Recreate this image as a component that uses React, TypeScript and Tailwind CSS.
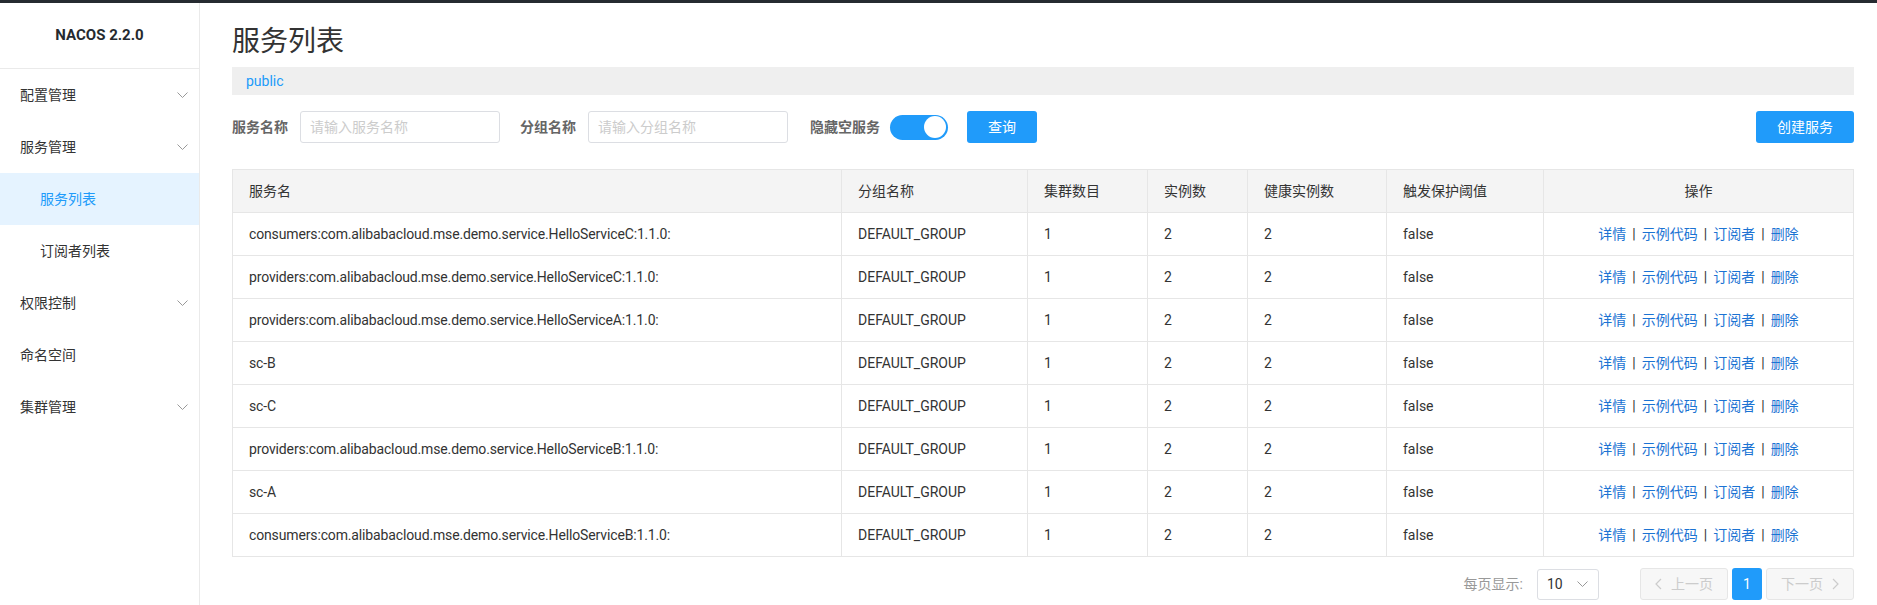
import React from "react"

const font = { fontFamily: "Roboto, 'Noto Sans CJK SC', sans-serif" }

const rows = [
  "consumers:com.alibabacloud.mse.demo.service.HelloServiceC:1.1.0:",
  "providers:com.alibabacloud.mse.demo.service.HelloServiceC:1.1.0:",
  "providers:com.alibabacloud.mse.demo.service.HelloServiceA:1.1.0:",
  "sc-B",
  "sc-C",
  "providers:com.alibabacloud.mse.demo.service.HelloServiceB:1.1.0:",
  "sc-A",
  "consumers:com.alibabacloud.mse.demo.service.HelloServiceB:1.1.0:",
]

const cols = [
  { title: "服务名", w: "w-[609px]" },
  { title: "分组名称", w: "w-[186px]" },
  { title: "集群数目", w: "w-[120px]" },
  { title: "实例数", w: "w-[100px]" },
  { title: "健康实例数", w: "w-[139px]" },
  { title: "触发保护阈值", w: "w-[157px]" },
]

function Chevron({ className = "" }: { className?: string }) {
  return (
    <svg width="11" height="6" viewBox="0 0 11 6" className={className}>
      <polyline points="0.5,0.5 5.5,5.5 10.5,0.5" fill="none" stroke="#999" strokeWidth="1" />
    </svg>
  )
}

const menu = [
  { label: "配置管理", arrow: true },
  { label: "服务管理", arrow: true },
  { label: "服务列表", sub: true, active: true },
  { label: "订阅者列表", sub: true },
  { label: "权限控制", arrow: true },
  { label: "命名空间" },
  { label: "集群管理", arrow: true },
]

export default function App() {
  return (
    <div className="w-[1877px] h-[605px] bg-white text-[#333] overflow-hidden flex flex-col" style={font}>
      <div className="h-[3px] bg-[#262b31] shrink-0" />
      <div className="flex flex-1 min-h-0">
        {/* Sidebar */}
        <aside className="w-[200px] shrink-0 border-r border-[#eaeaea]">
          <div className="h-[66px] border-b border-[#eaeaea] flex items-center justify-center text-[15px] font-bold text-[#252a2f]">
            NACOS 2.2.0
          </div>
          {menu.map((m) => (
            <div
              key={m.label}
              className={`h-[52px] flex items-center justify-between pr-[11px] text-[14px] ${
                m.sub ? "pl-[40px]" : "pl-[20px]"
              } ${m.active ? "bg-[#e5f3ff] text-[#209bfa]" : "text-[#333]"}`}
            >
              <span>{m.label}</span>
              {m.arrow && <Chevron />}
            </div>
          ))}
        </aside>

        {/* Main */}
        <main className="flex-1 pl-[32px] pr-[23px]">
          <h1 className="mt-[21px] h-[36px] leading-[36px] text-[28px] font-normal text-[#333]">服务列表</h1>
          <div className="mt-[7px] h-[28px] bg-[#efefef] flex items-center pl-[14px] text-[14px] text-[#209bfa]">
            public
          </div>

          <div className="mt-[16px] h-[32px] flex items-center text-[14px]">
            <span className="font-bold text-[#666] w-[56px]">服务名称</span>
            <input
              placeholder="请输入服务名称"
              className="ml-[12px] w-[200px] h-[32px] border border-[#dcdee3] rounded-[3px] px-[9px] text-[14px] placeholder:text-[#ccc] outline-none"
            />
            <span className="ml-[20px] font-bold text-[#666] w-[56px]">分组名称</span>
            <input
              placeholder="请输入分组名称"
              className="ml-[12px] w-[200px] h-[32px] border border-[#dcdee3] rounded-[3px] px-[9px] text-[14px] placeholder:text-[#ccc] outline-none"
            />
            <span className="ml-[22px] font-bold text-[#666]">隐藏空服务</span>
            <div className="ml-[10px] w-[58px] h-[25px] rounded-full bg-[#209bfa] flex items-center justify-end pr-[2px]">
              <div className="w-[22px] h-[22px] rounded-full bg-white" />
            </div>
            <button className="ml-[19px] w-[70px] h-[32px] rounded-[3px] bg-[#209bfa] text-white text-[14px]">查询</button>
            <div className="flex-1" />
            <button className="w-[98px] h-[32px] rounded-[3px] bg-[#209bfa] text-white text-[14px]">创建服务</button>
          </div>

          {/* Table */}
          <div className="mt-[26px] border-t border-l border-r border-[#e6e6e6] text-[14px]">
            <div className="flex h-[43px] bg-[#f4f4f4] border-b border-[#e6e6e6]">
              {cols.map((c) => (
                <div key={c.title} className={`${c.w} shrink-0 border-r border-[#e6e6e6] flex items-center pl-[16px]`}>
                  {c.title}
                </div>
              ))}
              <div className="flex-1 flex items-center justify-center">操作</div>
            </div>
            {rows.map((name, i) => (
              <div key={i} className="flex h-[43px] border-b border-[#e6e6e6]">
                {[name, "DEFAULT_GROUP", "1", "2", "2", "false"].map((v, j) => (
                  <div
                    key={j}
                    className={`${cols[j].w} shrink-0 border-r border-[#e6e6e6] flex items-center pl-[16px] ${
                      j === 0 ? "tracking-[-0.14px]" : ""
                    }`}
                  >
                    {v}
                  </div>
                ))}
                <div className="flex-1 flex items-center justify-center text-[#1b73d3]">
                  <span>详情</span>
                  <span className="mx-[6px] text-[#333]">|</span>
                  <span>示例代码</span>
                  <span className="mx-[6px] text-[#333]">|</span>
                  <span>订阅者</span>
                  <span className="mx-[6px] text-[#333]">|</span>
                  <span>删除</span>
                </div>
              </div>
            ))}
          </div>

          {/* Pagination */}
          <div className="mt-[11px] flex items-center justify-end text-[14px]">
            <span className="text-[#999]">每页显示:</span>
            <div className="ml-[14px] w-[62px] h-[31px] border border-[#dcdee3] rounded-[3px] flex items-center justify-between pl-[9px] pr-[10px]">
              <span className="text-[#333]">10</span>
              <Chevron />
            </div>
            <button className="ml-[41px] w-[88px] h-[32px] border border-[#e6e6e6] bg-[#f7f7f7] rounded-[3px] flex items-center justify-center text-[#ccc]">
              <svg width="7" height="12" viewBox="0 0 7 12" className="mr-[9px]">
                <polyline points="6,1 1,6 6,11" fill="none" stroke="#ccc" strokeWidth="1.2" />
              </svg>
              上一页
            </button>
            <button className="ml-[4px] w-[30px] h-[32px] rounded-[3px] bg-[#209bfa] text-white">1</button>
            <button className="ml-[4px] w-[88px] h-[32px] border border-[#e6e6e6] bg-[#f7f7f7] rounded-[3px] flex items-center justify-center text-[#ccc]">
              下一页
              <svg width="7" height="12" viewBox="0 0 7 12" className="ml-[9px]">
                <polyline points="1,1 6,6 1,11" fill="none" stroke="#ccc" strokeWidth="1.2" />
              </svg>
            </button>
          </div>
        </main>
      </div>
    </div>
  )
}
